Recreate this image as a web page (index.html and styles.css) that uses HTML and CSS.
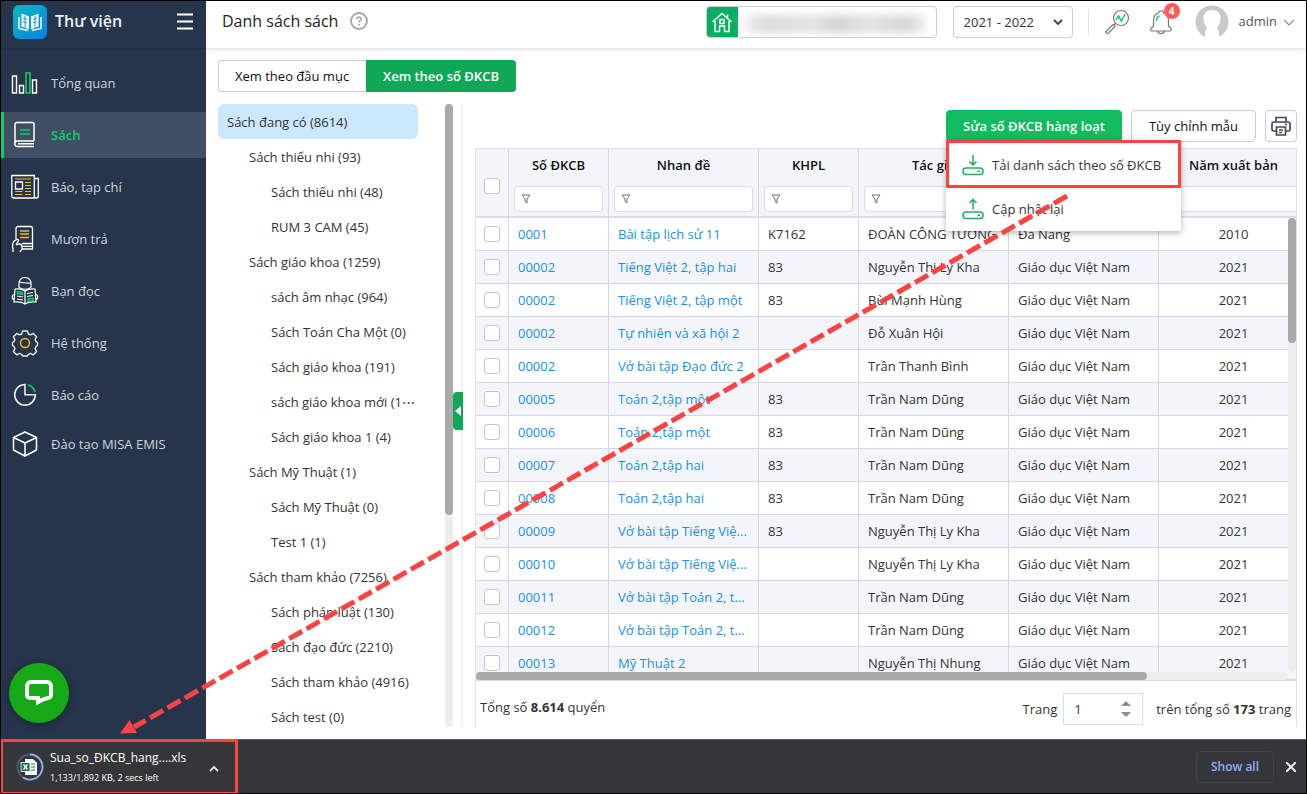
FILE: index.html
```html
<!DOCTYPE html>
<html lang="vi">
<head>
    <meta charset="UTF-8">
    <meta name="viewport" content="width=device-width, initial-scale=1.0">
    <title>Thư viện - Danh sách sách</title>
    <link rel="stylesheet" href="styles.css">
</head>
<body>
    <div class="app">
        <aside class="sidebar">
            <div class="brand">
                <svg class="logo" width="34" height="34" viewBox="0 0 34 34">
                    <defs>
                        <linearGradient id="logoBg" x1="0" y1="0" x2="1" y2="1">
                            <stop offset="0" stop-color="#0bb8bd"/>
                            <stop offset="1" stop-color="#077fe8"/>
                        </linearGradient>
                    </defs>
                    <rect width="34" height="34" rx="6" fill="url(#logoBg)"/>
                    <path d="M8.500 8.500l7.500 3v13l-7.500-3zM25.500 8.500l-7.500 3v13l7.500-3z" fill="#fff"/>
                    <path d="M10 13l4 1.500M10 16.500l4 1.500M24 13l-4 1.500M24 16.500l-4 1.500M12 11v12M22 11v12" stroke="#0a9fd3" stroke-width="1"/>
                    <path d="M6 12v11.500l9 2M28 12v11.500l-9 2" fill="none" stroke="#fff" stroke-width="1.500"/>
                </svg>
                <span class="brand-name">Thư viện</span>
                <button class="menu-toggle" type="button" aria-label="Menu">
                    <svg width="16" height="17" viewBox="0 0 16 17"><path d="M0 1.500h16M0 8.500h16M0 15.500h16" stroke="#fff" stroke-width="2"/></svg>
                </button>
            </div>
            <nav>
                <a href="#">
                    <svg width="28" height="28" viewBox="0 0 28 28" fill="none" stroke="#fff" stroke-width="1.400">
                        <path d="M1.500 7h4v17h-4zM8.500 16.500h4V24h-4zM21.500 11h4v13h-4z"/>
                        <path d="M15 4h4v20h-4z" stroke="#12ce66" stroke-width="1.600"/>
                    </svg>
                    <span>Tổng quan</span>
                </a>
                <a href="#" class="active">
                    <svg width="28" height="28" viewBox="0 0 28 28" fill="none" stroke="#fff" stroke-width="1.500">
                        <path d="M23 20H6.500a2.500 2.500 0 0 0 0 5.500H23M4 22.500V3.500a2 2 0 0 1 2-2h15a2 2 0 0 1 2 2v16.500M7 22.800h16"/>
                        <path d="M9 9h10M9 13h10" stroke="#12ce66"/>
                    </svg>
                    <span>Sách</span>
                </a>
                <a href="#">
                    <svg width="28" height="28" viewBox="0 0 28 28" fill="none" stroke="#fff" stroke-width="1.300">
                        <path d="M24 25H2.500A2 2 0 0 1 .8 23V2.500h22.500v20.500a2 2 0 0 0 4 0V5.500h-4M4.500 9h7v7h-7z"/>
                        <path d="M4 6h16M14 9.500h6M14 12.500h6M14 15.500h6M4 18.500h7.500M14 18.500h6M4 21.500h7.500M14 21.500h6" stroke="#f3bd00" stroke-width="1.200"/>
                    </svg>
                    <span>Báo, tạp chí</span>
                </a>
                <a href="#">
                    <svg width="28" height="28" viewBox="0 0 28 28" fill="none" stroke="#fff" stroke-width="1.300">
                        <path d="M5 14V3.500a2 2 0 0 1 2-2h12.500a2 2 0 0 1 2 2V24H11M11 18.500h10.500M11 21.300h10.500"/>
                        <path d="M2 27v-3C1 20 2 16 5.500 14.500c2-.5 2.500.5 1.500 2L5 20M5 20l3-1c2 0 3 .500 3 2.500V24l-2 3"/>
                        <path d="M9 6h9M9 9h9M9 12.500h9" stroke="#f3bd00"/>
                    </svg>
                    <span>Mượn trả</span>
                </a>
                <a href="#">
                    <svg width="28" height="28" viewBox="0 0 28 28" fill="none" stroke="#fff" stroke-width="1.200">
                        <path d="M8 10V6a6 5.500 0 0 1 12 0v4c-2 3-10 3-12 0zM8 5.500c4-1 8 2 12 0"/>
                        <path d="M14 14c-3-2-7-2.500-10-2l-1 13c4-.5 8 0 11 2 3-2 7-2.500 11-2l-1-13c-3-.5-7 0-10 2zM14 14v13M3.500 17.500c-3 0-3 5 0 5M24.500 17.500c3 0 3 5 0 5M6 19l6 1M6 22l6 1M16 16.500l6-1M16 19.500l6-1"/>
                        <path d="M6.500 14.500l5 .8v2l-5-.8zM17 22l5-.8v2.500l-5 .6z" stroke="#12ce66" stroke-width="1.500"/>
                    </svg>
                    <span>Bạn đọc</span>
                </a>
                <a href="#">
                    <svg width="28" height="28" viewBox="0 0 28 28" fill="none" stroke="#e9ebee" stroke-width="1.400" stroke-linejoin="round">
                        <path d="M11.500 2h5l.8 3 2.200.9 2.700-1.500 3.400 3.400-1.500 2.700.9 2.200 1.500.8v3l-1.500 1-.9 2.300 1.500 2.700-3.400 3.400-2.700-1.500-2.200.9-.8 1.700h-5l-.8-1.700-2.200-.9-2.700 1.500-3.400-3.400 1.500-2.700-.9-2.300-1.500-1v-3l1.500-.8.9-2.200-1.500-2.700 3.400-3.400 2.700 1.500 2.200-.9z"/>
                        <circle cx="14" cy="14" r="4.500" stroke="#f3bd00" stroke-width="1.500"/>
                    </svg>
                    <span>Hệ thống</span>
                </a>
                <a href="#">
                    <svg width="28" height="28" viewBox="0 0 28 28" fill="none" stroke="#e9ebee" stroke-width="1.600">
                        <path d="M14 3.500a10.300 10.300 0 1 0 10.300 10.300H14z"/>
                        <path d="M17 3.800a10 10 0 0 1 7 7.400" stroke="#12ce66"/>
                    </svg>
                    <span>Báo cáo</span>
                </a>
                <a href="#" class="last">
                    <svg width="28" height="28" viewBox="0 0 28 28" fill="none" stroke="#fff" stroke-width="1.500" stroke-linejoin="round">
                        <path d="M14 2l11.500 5.500v12.500L14 26 2.500 20V7.500zM2.500 7.500L14 13l11.500-5.500M14 13v13"/>
                    </svg>
                    <span>Đào tạo MISA EMIS</span>
                </a>
            </nav>
            <button class="chat" type="button" aria-label="Chat">
                <svg width="30" height="30" viewBox="0 0 30 30"><path d="M7 4h16a4 4 0 0 1 4 4v9a3 3 0 0 1-3 3c-4 .5-6 1.500-10 4v-4H6a3 3 0 0 1-3-3V8a4 4 0 0 1 4-4z" fill="none" stroke="#fff" stroke-width="4"/></svg>
            </button>
        </aside>

        <div class="main">
            <header class="topbar">
                <h1>Danh sách sách</h1>
                <svg class="help" width="18" height="18" viewBox="0 0 18 18" fill="none" stroke="#a9a9a9" stroke-width="2">
                    <circle cx="9" cy="9" r="8"/>
                    <path d="M6.800 7.300c0-3 4.600-2.700 4.400-.2-.1 1.500-2.200 1.400-2.200 3.200M9 11.700v1.800" stroke-width="1.700"/>
                </svg>
                <div class="school">
                    <span class="school-icon">
                        <svg width="22" height="22" viewBox="0 0 22 22" fill="none" stroke="#fff" stroke-width="1.500">
                            <path d="M1.500 11L11 2.500l9.500 8.500M4 10v10.500h4.500v-5.500h5v5.500H18V10M9 8.500h4v4H9zM16.500 6.500v-3"/>
                        </svg>
                    </span>
                    <span class="school-name"></span>
                </div>
                <div class="year">
                    <select aria-label="Năm học"><option>2021 - 2022</option></select>
                    <svg width="10" height="6" viewBox="0 0 10 6"><path d="M1 1l4 4 4-4" fill="none" stroke="#3d3c58" stroke-width="1.800"/></svg>
                </div>
                <span class="divider"></span>
                <svg class="search" width="26" height="26" viewBox="0 0 26 26" fill="none" stroke="#777" stroke-width="1.200">
                    <circle cx="17" cy="9" r="7.500"/>
                    <path d="M11.500 14.500l-2 2M9 15.500l2 2-7 7c-1 .8-3-1-2-2z"/>
                    <path d="M12 11l2.500-4 3 5 3.500-7" stroke="#12ce66" stroke-width="1.500"/>
                </svg>
                <button class="bell" type="button" aria-label="Thông báo">
                    <svg width="24" height="28" viewBox="0 0 24 28" fill="none" stroke="#777" stroke-width="1.200">
                        <path d="M9.500 5c0-3 5-3 5 0 4 1 5 5 5 8v5l2.500 2.500c.8 1 .2 2.500-1 2.500H3c-1.200 0-1.800-1.500-1-2.500L4.500 18v-5c0-3 1-7 5-8zM8.500 23c1 3.500 6 3.500 7 0"/>
                        <path d="M7.500 13c0-2.500.8-4.500 3-5" stroke="#12ce66" stroke-width="1.500"/>
                    </svg>
                    <span class="badge">4</span>
                </button>
                <svg class="avatar" width="34" height="34" viewBox="0 0 34 34">
                    <circle cx="17" cy="17" r="16.500" fill="#c9c9c9"/>
                    <path d="M17 5c6 0 9 4 8.500 9.500-.4 4-1.500 6-3.500 8 0 2 1 2.500 2 3.500v8H10v-8c1-1 2-1.500 2-3.500-2-2-3.100-4-3.500-8C8 9 11 5 17 5z" fill="#fff"/>
                </svg>
                <span class="user">admin</span>
                <svg class="user-arrow" width="10" height="7" viewBox="0 0 10 7"><path d="M0 1l5 5 5-5" fill="none" stroke="#888" stroke-width="1.200"/></svg>
            </header>

            <div class="content">
                <div class="tabs">
                    <button type="button">Xem theo đầu mục</button>
                    <button type="button" class="active">Xem theo số ĐKCB</button>
                </div>

                <div class="panels">
                    <div class="tree">
                        <ul>
                            <li class="selected">Sách đang có <b>(8614)</b></li>
                            <li class="lv1">Sách thiếu nhi <b>(93)</b></li>
                            <li class="lv2">Sách thiếu nhi <b>(48)</b></li>
                            <li class="lv2">RUM 3 CAM <b>(45)</b></li>
                            <li class="lv1">Sách giáo khoa <b>(1259)</b></li>
                            <li class="lv2">sách âm nhạc <b>(964)</b></li>
                            <li class="lv2">Sách Toán Cha Một <b>(0)</b></li>
                            <li class="lv2">Sách giáo khoa <b>(191)</b></li>
                            <li class="lv2">sách giáo khoa mới <b>(1⋯</b></li>
                            <li class="lv2">Sách giáo khoa 1 <b>(4)</b></li>
                            <li class="lv1">Sách Mỹ Thuật <b>(1)</b></li>
                            <li class="lv2">Sách Mỹ Thuật <b>(0)</b></li>
                            <li class="lv2">Test 1 <b>(1)</b></li>
                            <li class="lv1">Sách tham khảo <b>(7256)</b></li>
                            <li class="lv2">Sách pháp luật <b>(130)</b></li>
                            <li class="lv2">Sách đạo đức <b>(2210)</b></li>
                            <li class="lv2">Sách tham khảo <b>(4916)</b></li>
                            <li class="lv2">Sách test <b>(0)</b></li>
                        </ul>
                        <div class="tree-scroll"><span></span></div>
                    </div>

                    <section class="books">
                        <button class="collapse" type="button" aria-label="Thu gọn">
                            <svg width="6" height="10" viewBox="0 0 6 10"><path d="M6 0v10L0 5z" fill="#fff"/></svg>
                        </button>
                        <div class="toolbar">
                            <div class="dropdown">
                                <button type="button" class="btn primary">Sửa số ĐKCB hàng loạt</button>
                                <div class="menu">
                                    <a href="#" class="marked">
                                        <svg width="22" height="22" viewBox="0 0 22 22" fill="none" stroke="#1fae5c" stroke-width="1.500"><rect x="1" y="14" width="20" height="6.500" rx="3"/><path d="M11 1v9.500M7.500 7.500L11 11l3.500-3.500M15.500 17.300H18"/></svg>
                                        <span>Tải danh sách theo số ĐKCB</span>
                                    </a>
                                    <a href="#">
                                        <svg width="22" height="22" viewBox="0 0 22 22" fill="none" stroke="#1fae5c" stroke-width="1.500"><rect x="1" y="14" width="20" height="6.500" rx="3"/><path d="M11 11.500V2M7.500 5L11 1.500 14.500 5M15.500 17.300H18"/></svg>
                                        <span>Cập nhật lại</span>
                                    </a>
                                </div>
                            </div>
                            <button type="button" class="btn">Tùy chỉnh mẫu</button>
                            <button type="button" class="btn print" aria-label="In">
                                <svg width="20" height="20" viewBox="0 0 20 20" fill="none" stroke="#45445c" stroke-width="1.700">
                                    <path d="M5 6V1.500h10V6M5 15H2.500a1.500 1.500 0 0 1-1.500-1.500V8a2 2 0 0 1 2-2h14a2 2 0 0 1 2 2v5.500a1.500 1.500 0 0 1-1.500 1.500H15M5.500 11h9v8h-9zM8 14h4M8 16.500h3M14 8.500h2"/>
                                </svg>
                            </button>
                        </div>

                        <div class="grid">
                            <div class="grid-body">
                                <table>
                                    <colgroup>
                                        <col class="c-check"><col class="c-small"><col class="c-big"><col class="c-small"><col class="c-big"><col class="c-big"><col class="c-big">
                                    </colgroup>
                                    <thead>
                                        <tr>
                                            <th><input type="checkbox" aria-label="Chọn tất cả"></th>
                                            <th>Số ĐKCB<div class="filter"><svg viewBox="0 0 10 10"><path d="M1 1h8L6 5v4L4 7.500V5z"/></svg><input type="text" aria-label="Lọc số ĐKCB"></div></th>
                                            <th>Nhan đề<div class="filter"><svg viewBox="0 0 10 10"><path d="M1 1h8L6 5v4L4 7.500V5z"/></svg><input type="text" aria-label="Lọc nhan đề"></div></th>
                                            <th>KHPL<div class="filter"><svg viewBox="0 0 10 10"><path d="M1 1h8L6 5v4L4 7.500V5z"/></svg><input type="text" aria-label="Lọc KHPL"></div></th>
                                            <th>Tác giả<div class="filter"><svg viewBox="0 0 10 10"><path d="M1 1h8L6 5v4L4 7.500V5z"/></svg><input type="text" aria-label="Lọc tác giả"></div></th>
                                            <th><div class="filter alone"><svg viewBox="0 0 10 10"><path d="M1 1h8L6 5v4L4 7.500V5z"/></svg><input type="text" aria-label="Lọc nhà xuất bản"></div></th>
                                            <th>Năm xuất bản<div class="filter"><svg viewBox="0 0 10 10"><path d="M1 1h8L6 5v4L4 7.500V5z"/></svg><input type="text" aria-label="Lọc năm xuất bản"></div></th>
                                        </tr>
                                    </thead>
                                    <tbody>
                                        <tr><td><input type="checkbox" aria-label="Chọn"></td><td><a href="#">0001</a></td><td><a href="#">Bài tập lịch sử 11</a></td><td>K7162</td><td>ĐOÀN CÔNG TƯƠNG</td><td>Đà Nẵng</td><td>2010</td></tr>
                                        <tr><td><input type="checkbox" aria-label="Chọn"></td><td><a href="#">00002</a></td><td><a href="#">Tiếng Việt 2, tập hai</a></td><td>83</td><td>Nguyễn Thị Ly Kha</td><td>Giáo dục Việt Nam</td><td>2021</td></tr>
                                        <tr><td><input type="checkbox" aria-label="Chọn"></td><td><a href="#">00002</a></td><td><a href="#">Tiếng Việt 2, tập một</a></td><td>83</td><td>Bùi Mạnh Hùng</td><td>Giáo dục Việt Nam</td><td>2021</td></tr>
                                        <tr><td><input type="checkbox" aria-label="Chọn"></td><td><a href="#">00002</a></td><td><a href="#">Tự nhiên và xã hội 2</a></td><td></td><td>Đỗ Xuân Hội</td><td>Giáo dục Việt Nam</td><td>2021</td></tr>
                                        <tr><td><input type="checkbox" aria-label="Chọn"></td><td><a href="#">00002</a></td><td><a href="#">Vở bài tập Đạo đức 2</a></td><td></td><td>Trần Thanh Bình</td><td>Giáo dục Việt Nam</td><td>2021</td></tr>
                                        <tr><td><input type="checkbox" aria-label="Chọn"></td><td><a href="#">00005</a></td><td><a href="#">Toán 2,tập một</a></td><td>83</td><td>Trần Nam Dũng</td><td>Giáo dục Việt Nam</td><td>2021</td></tr>
                                        <tr><td><input type="checkbox" aria-label="Chọn"></td><td><a href="#">00006</a></td><td><a href="#">Toán 2,tập một</a></td><td>83</td><td>Trần Nam Dũng</td><td>Giáo dục Việt Nam</td><td>2021</td></tr>
                                        <tr><td><input type="checkbox" aria-label="Chọn"></td><td><a href="#">00007</a></td><td><a href="#">Toán 2,tập hai</a></td><td>83</td><td>Trần Nam Dũng</td><td>Giáo dục Việt Nam</td><td>2021</td></tr>
                                        <tr><td><input type="checkbox" aria-label="Chọn"></td><td><a href="#">00008</a></td><td><a href="#">Toán 2,tập hai</a></td><td>83</td><td>Trần Nam Dũng</td><td>Giáo dục Việt Nam</td><td>2021</td></tr>
                                        <tr><td><input type="checkbox" aria-label="Chọn"></td><td><a href="#">00009</a></td><td><a href="#">Vở bài tập Tiếng Việ...</a></td><td>83</td><td>Nguyễn Thị Ly Kha</td><td>Giáo dục Việt Nam</td><td>2021</td></tr>
                                        <tr><td><input type="checkbox" aria-label="Chọn"></td><td><a href="#">00010</a></td><td><a href="#">Vở bài tập Tiếng Việ...</a></td><td></td><td>Nguyễn Thị Ly Kha</td><td>Giáo dục Việt Nam</td><td>2021</td></tr>
                                        <tr><td><input type="checkbox" aria-label="Chọn"></td><td><a href="#">00011</a></td><td><a href="#">Vở bài tập Toán 2, t...</a></td><td></td><td>Trần Nam Dũng</td><td>Giáo dục Việt Nam</td><td>2021</td></tr>
                                        <tr><td><input type="checkbox" aria-label="Chọn"></td><td><a href="#">00012</a></td><td><a href="#">Vở bài tập Toán 2, t...</a></td><td></td><td>Trần Nam Dũng</td><td>Giáo dục Việt Nam</td><td>2021</td></tr>
                                        <tr><td><input type="checkbox" aria-label="Chọn"></td><td><a href="#">00013</a></td><td><a href="#">Mỹ Thuật 2</a></td><td></td><td>Nguyễn Thị Nhung</td><td>Giáo dục Việt Nam</td><td>2021</td></tr>
                                    </tbody>
                                </table>
                                <div class="scroll-y"><span></span></div>
                                <div class="scroll-x"><span></span></div>
                            </div>
                            <div class="grid-footer">
                                <p>Tổng số <strong>8.614</strong> quyển</p>
                                <div class="pager">
                                    <label for="page">Trang</label>
                                    <div class="spin">
                                        <input type="text" id="page" value="1">
                                        <svg width="10" height="16" viewBox="0 0 10 16" fill="#8c8c8c"><path d="M5 0l5 5H0zM5 16l5-5H0z"/></svg>
                                    </div>
                                    <p>trên tổng số <strong>173</strong> trang</p>
                                </div>
                            </div>
                        </div>
                    </section>
                </div>
            </div>
        </div>
    </div>

    <footer class="downloads">
        <div class="download">
            <svg width="28" height="28" viewBox="0 0 28 28">
                <circle cx="14" cy="14" r="12.500" fill="none" stroke="#4c5c7d" stroke-width="1.800"/>
                <path d="M14 1.500a12.500 12.500 0 1 1-7 22.900" fill="none" stroke="#8ab0f5" stroke-width="1.800"/>
                <path d="M9 6h8l4 4v12H9z" fill="#fff"/>
                <path d="M15 11h4M15 14h4M15 17h4" stroke="#1d7145" stroke-width="1.200"/>
                <rect x="5" y="9.500" width="9" height="9" fill="#1d7145" stroke="#fff" stroke-width=".8"/>
                <path d="M7.500 11.500l4 5M11.500 11.500l-4 5" stroke="#fff" stroke-width="1.300"/>
            </svg>
            <div class="download-info">
                <div class="file">Sua_so_ĐKCB_hang....xls</div>
                <div class="size">1,133/1,892 KB, 2 secs left</div>
            </div>
            <button type="button" aria-label="Tùy chọn">
                <svg width="10" height="7" viewBox="0 0 10 7"><path d="M1 6l4-4 4 4" fill="none" stroke="#e8eaed" stroke-width="1.800"/></svg>
            </button>
        </div>
        <button type="button" class="show-all">Show all</button>
        <button type="button" class="close" aria-label="Đóng">
            <svg width="10" height="10" viewBox="0 0 10 10"><path d="M0 0l10 10M10 0L0 10" stroke="#e8eaed" stroke-width="2"/></svg>
        </button>
    </footer>

    <svg class="arrow" width="1080" height="740" viewBox="0 0 1080 740">
        <path d="M1067 196L134 727" stroke="#fd4242" stroke-width="5" stroke-dasharray="15 5"/>
        <path d="M120 733.500L129.500 720 137 733z" fill="#fd4242"/>
    </svg>
</body>
</html>
```
FILE: styles.css
```css
* {
    box-sizing: border-box;
}
body {
    margin: 0;
    height: 100vh;
    display: flex;
    flex-direction: column;
    overflow: hidden;
    border: 1px solid #000;
    background: #fff;
    color: #333;
    font-family: "Open Sans", "Noto Sans", sans-serif;
    font-size: 13px;
    line-height: 18px;
}
button, input, select {
    font: inherit;
    color: inherit;
}
button {
    padding: 0;
    border: none;
    background: none;
    cursor: pointer;
}
a {
    text-decoration: none;
}
p, ul, h1 {
    margin: 0;
    padding: 0;
}
svg {
    flex-shrink: 0;
}
.app {
    flex: 1;
    display: flex;
    min-height: 0;
}

/* sidebar */
.sidebar {
    position: relative;
    width: 205px;
    flex-shrink: 0;
    background: #26354b;
    color: #ced3da;
}
.brand {
    height: 47px;
    display: flex;
    align-items: center;
    padding: 0 13px 6px 12px;
    box-shadow: 0 1px 2px rgba(0, 0, 0, 0.15);
}
.brand-name {
    margin-left: 8px;
    padding-bottom: 2px;
    flex: 1;
    font-size: 16px;
    font-weight: 600;
    color: #f0f1f3;
}
.menu-toggle {
    height: 17px;
}
.menu-toggle svg {
    display: block;
}
nav {
    padding-top: 12px;
}
nav a {
    display: flex;
    align-items: center;
    gap: 12px;
    height: 46px;
    margin-bottom: 6px;
    padding-left: 7px;
    border-left: 3px solid transparent;
    color: #ced3da;
}
nav a.active {
    background: #414f64;
    border-color: #12ce66;
    color: #12ce66;
    font-weight: 600;
}
nav a.last {
    height: 40px;
}
.chat {
    position: absolute;
    left: 8px;
    bottom: 16px;
    width: 60px;
    height: 60px;
    border-radius: 50%;
    background: #17a817;
    box-shadow: 0 2px 8px rgba(0, 0, 0, 0.3);
}
.chat svg {
    display: block;
    margin: auto;
}

/* top bar */
.main {
    flex: 1;
    min-width: 0;
    display: flex;
    flex-direction: column;
}
.topbar {
    height: 47px;
    display: flex;
    align-items: center;
    padding: 0 12px 5px 16px;
    box-shadow: 0 1px 4px rgba(0, 0, 0, 0.15);
}
h1 {
    padding-bottom: 2px;
    font-size: 16px;
    font-weight: 400;
    color: #222;
}
.help {
    margin: 0 0 2px 12px;
}
.school {
    display: flex;
    width: 231px;
    height: 32px;
    margin-left: auto;
    border: 1px solid #ccc;
    border-radius: 4px;
    overflow: hidden;
}
.school-icon {
    display: flex;
    align-items: center;
    justify-content: center;
    width: 31px;
    background: #09ae62;
}
.school-name {
    flex: 1;
    margin: 8px 12px 4px 6px;
    background: linear-gradient(90deg, #f4f4f4, #dcdcdc 10%, #e2e2e2 40%, #d4d4d4 50%, #e2e2e2 70%, #d6d6d6 90%, #e8e8e8);
    filter: blur(4px);
}
.year {
    position: relative;
    margin-left: 16px;
}
.year select {
    display: block;
    width: 120px;
    height: 32px;
    padding: 0 10px;
    border: 1px solid #ccc;
    border-radius: 4px;
    background: #fff;
    appearance: none;
}
.year svg {
    position: absolute;
    right: 10px;
    top: 13px;
    pointer-events: none;
}
.divider {
    width: 1px;
    height: 26px;
    margin: 0 15px;
    background: #e2e3e8;
}
.bell {
    position: relative;
    height: 28px;
    margin: 0 22px 0 19px;
}
.badge {
    position: absolute;
    top: -5px;
    right: -7px;
    width: 16px;
    height: 16px;
    border-radius: 50%;
    background: #ff5b5b;
    color: #fff;
    font-size: 10px;
    font-weight: 700;
    line-height: 16px;
}
.user {
    margin: 0 7px 2px 10px;
    color: #555;
}

/* content */
.content {
    flex: 1;
    min-height: 0;
    display: flex;
    flex-direction: column;
    padding: 12px 9px 12px 12px;
}
.tabs {
    display: flex;
    margin-bottom: 12px;
}
.tabs button {
    height: 32px;
    padding: 0 17px 0 16px;
    border: 1px solid #ccc;
    border-right: none;
    border-radius: 4px 0 0 4px;
    font-weight: 500;
    color: #111;
}
.tabs button.active {
    padding: 0 17px;
    border: none;
    border-radius: 0 4px 4px 0;
    background: #10a857;
    color: #fff;
    font-weight: 600;
}
.panels {
    flex: 1;
    min-height: 0;
    display: flex;
}
.tree {
    width: 235px;
    flex-shrink: 0;
    display: flex;
    justify-content: space-between;
    overflow: hidden;
}
.tree ul {
    width: 200px;
    list-style: none;
}
.tree li {
    height: 35px;
    padding-left: 9px;
    line-height: 37px;
    white-space: nowrap;
    border-radius: 6px;
}
.tree li.selected {
    background: #cce8ff;
}
.tree li.lv1 {
    padding-left: 31px;
}
.tree li.lv2 {
    padding-left: 53px;
}
.tree b {
    font-weight: 500;
}
.tree-scroll {
    width: 8px;
    border-radius: 4px;
    background: #ededed;
}
.tree-scroll span {
    display: block;
    height: 66%;
    border-radius: 4px;
    background: #a9a9a9;
}
.books {
    position: relative;
    flex: 1;
    min-width: 0;
    display: flex;
    flex-direction: column;
    margin-left: 8px;
    padding: 6px 0 0 12px;
    border-left: 2px solid #f1f2f7;
}
.collapse {
    position: absolute;
    left: -10px;
    top: 288px;
    width: 10px;
    height: 38px;
    border-radius: 4px 0 0 4px;
    background: #10a857;
}
.collapse svg {
    display: block;
    margin: auto;
}
.toolbar {
    display: flex;
    justify-content: flex-end;
    gap: 9px;
    margin-bottom: 6px;
}
.btn {
    height: 32px;
    padding: 0 17px;
    border: 1px solid #ccc;
    border-radius: 4px;
    background: #fff;
    color: #111;
    font-weight: 500;
}
.btn.primary {
    padding: 0 16px;
    border-color: #12bb5f;
    background: #12bb5f;
    color: #fff;
    font-weight: 600;
}
.btn.print {
    width: 32px;
    padding: 0;
}
.print svg {
    display: block;
    margin: auto;
}
.dropdown {
    position: relative;
}
.menu {
    position: absolute;
    z-index: 2;
    top: 30px;
    left: 0;
    width: 235px;
    padding-bottom: 1px;
    border-radius: 3px;
    background: #fff;
    box-shadow: 0 2px 6px rgba(0, 0, 0, 0.3);
}
.menu a {
    display: flex;
    align-items: center;
    gap: 8px;
    height: 42px;
    padding-left: 16px;
    color: #333;
}
.menu a.marked {
    height: 48px;
    padding: 2px 0 0 13px;
    border: 3px solid #fd4242;
}

/* grid */
.grid {
    flex: 1;
    min-height: 0;
    display: flex;
    flex-direction: column;
    border: 1px solid #e0e2ea;
    border-bottom: none;
}
.grid-body {
    position: relative;
    flex: 1;
    min-height: 0;
    overflow: hidden;
    border-bottom: 1px solid #ddd;
}
table {
    width: 100%;
    min-width: 833px;
    table-layout: fixed;
    border-collapse: separate;
    border-spacing: 0;
}
.c-check {
    width: 33px;
}
.c-small {
    width: 100px;
}
.c-big {
    width: 150px;
}
th {
    height: 69px;
    padding: 7px 5px 4px;
    background: #f4f5fa;
    border-right: 1px solid #d3d7e8;
    border-bottom: 2px solid #dcdfe8;
    color: #111;
    font-weight: 600;
}
td {
    height: 33px;
    padding: 0 9px;
    border-right: 1px solid #d3d7e8;
    border-bottom: 1px solid #d3d7e8;
    white-space: nowrap;
}
td:first-child {
    padding: 0;
}
th:first-child {
    padding: 7px 0 0;
}
td:last-child {
    text-align: center;
}
tbody tr:nth-child(even) {
    background: #f4f5fa;
}
td a {
    color: #1592e6;
}
input[type="checkbox"] {
    display: block;
    width: 16px;
    height: 16px;
    margin: 0 auto;
    border: 1px solid #c6c6c6;
    border-radius: 3px;
    background: #fff;
    appearance: none;
}
.filter {
    display: flex;
    align-items: center;
    height: 26px;
    margin-top: 12px;
    padding-left: 6px;
    border: 1px solid #ddd;
    border-radius: 4px;
    background: #fff;
}
.filter.alone {
    margin-top: 30px;
}
.filter svg {
    width: 10px;
    height: 10px;
    fill: none;
    stroke: #6c6b84;
}
.filter input {
    flex: 1;
    min-width: 0;
    height: 24px;
    border: none;
    background: none;
    outline: none;
}
.scroll-y, .scroll-x {
    position: absolute;
    border-radius: 4px;
    background: #ededed;
}
.scroll-y {
    top: 69px;
    right: 0;
    bottom: 8px;
    width: 8px;
}
.scroll-x {
    left: 0;
    right: 8px;
    bottom: 0;
    height: 8px;
}
.scroll-y span, .scroll-x span {
    display: block;
    border-radius: 4px;
    background: #a9a9a9;
}
.scroll-y span {
    height: 125px;
}
.scroll-x span {
    width: 671px;
    height: 8px;
}
.grid-footer {
    height: 46px;
    display: flex;
    justify-content: space-between;
    padding: 0 5px 0 4px;
    line-height: 52px;
}
strong {
    font-weight: 700;
}
.pager {
    display: flex;
    align-items: center;
    padding-top: 10px;
}
.spin {
    position: relative;
    margin: 0 13px 0 6px;
}
.spin input {
    display: block;
    width: 80px;
    height: 32px;
    padding: 0 10px;
    border: 1px solid #ddd;
}
.spin svg {
    position: absolute;
    right: 12px;
    top: 8px;
}

/* download bar */
.downloads {
    height: 54px;
    display: flex;
    align-items: center;
    background: #35363a;
    border-top: 1px solid #5c5d60;
    color: #fff;
}
.download {
    display: flex;
    align-items: center;
    width: 238px;
    height: 56px;
    margin: -1px auto -1px -1px;
    padding: 0 16px 0 13px;
    border: 3px solid #fd4242;
}
.download-info {
    flex: 1;
    margin-left: 6px;
    padding-top: 2px;
}
.file {
    font-size: 12px;
}
.size {
    margin-top: 2px;
    font-size: 9px;
    font-weight: 500;
}
.show-all {
    width: 78px;
    height: 32px;
    border: 1px solid #404145;
    border-radius: 4px;
    color: #8ab0f5;
    font-size: 12px;
    font-weight: 600;
}
.close {
    margin: 0 10px 0 12px;
}
.close svg {
    display: block;
}

/* guide arrow over the page */
.arrow {
    position: absolute;
    z-index: 3;
    left: 0;
    top: 0;
    pointer-events: none;
}
```
